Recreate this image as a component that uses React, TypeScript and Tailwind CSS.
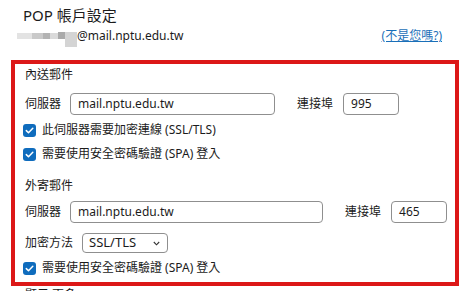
import React from "react";

const Check = () => (
  <span className="flex h-[13px] w-[13px] items-center justify-center rounded-[3px] bg-[#0f6cbd]">
    <svg width="11" height="11" viewBox="0 0 11 11" fill="none">
      <path d="M2.3 5.6 L4.5 7.8 L8.8 3.3" stroke="white" strokeWidth="1.5" strokeLinecap="round" strokeLinejoin="round" />
    </svg>
  </span>
);

const CheckRow = ({ text }: { text: string }) => (
  <div className="flex h-[16px] items-center gap-[6px] pl-[8px]">
    <Check />
    <span className="text-[12px] leading-[16px] text-[#1b1b1b]">{text}</span>
  </div>
);

const Input = ({ value, w }: { value: string; w: string }) => (
  <div className={`flex h-[22px] items-center rounded-[4px] border border-[#8f8f8f] bg-white pl-[7px] text-[12px] text-[#1b1b1b] ${w}`}>
    {value}
  </div>
);

export default function App() {
  return (
    <div className="h-[291px] w-[472px] overflow-hidden bg-white font-['Noto_Sans','Noto_Sans_CJK_TC',sans-serif] text-[#1b1b1b]">
      <div className="pl-[23px] pt-[5px] text-[15px] leading-[20px]">POP 帳戶設定</div>
      <div className="mt-[2px] flex h-[18px] items-center justify-between pl-[17px] pr-[30px]">
        <div className="flex items-center">
          <div className="relative h-[18px] w-[60px]">
            <div className="absolute left-0 top-[6px] h-[6px] w-[15px] bg-[#e3e3e3]" />
            <div className="absolute left-[15px] top-[6px] h-[6px] w-[11px] bg-[#c9c9c9]" />
            <div className="absolute left-[26px] top-[6px] h-[6px] w-[7px] bg-[#b3b3b3]" />
            <div className="absolute left-[33px] top-[6px] h-[6px] w-[8px] bg-[#dadada]" />
            <div className="absolute left-[41px] top-[5px] h-[7px] w-[7px] bg-[#aaaaaa]" />
            <div className="absolute left-[48px] top-[5px] h-[15px] w-[12px] bg-[#d4d4d4]" />
          </div>
          <span className="text-[12px] leading-[18px]">@mail.nptu.edu.tw</span>
        </div>
        <span className="text-[12px] leading-[16px] text-[#1a6fb8] underline">(不是您嗎?)</span>
      </div>

      <div className="ml-[11px] mt-[15px] h-[226px] w-[448px] border-4 border-[#dc1818]">
        <div className="pl-[10px] pt-[3px] text-[12px] leading-[16px]">內送郵件</div>
        <div className="mt-[10px] flex items-center pl-[10px] text-[12px]">
          <span className="w-[36px]">伺服器</span>
          <div className="ml-[9px]"><Input value="mail.nptu.edu.tw" w="w-[205px]" /></div>
          <span className="ml-[22px]">連接埠</span>
          <div className="ml-[10px]"><Input value="995" w="w-[56px]" /></div>
        </div>
        <div className="mt-[7px]"><CheckRow text="此伺服器需要加密連線 (SSL/TLS)" /></div>
        <div className="mt-[8px]"><CheckRow text="需要使用安全密碼驗證 (SPA) 登入" /></div>

        <div className="mt-[16px] pl-[10px] text-[12px] leading-[16px]">外寄郵件</div>
        <div className="mt-[7px] flex items-center pl-[10px] text-[12px]">
          <span className="w-[36px]">伺服器</span>
          <div className="ml-[9px]"><Input value="mail.nptu.edu.tw" w="w-[253px]" /></div>
          <span className="ml-[22px]">連接埠</span>
          <div className="ml-[10px]"><Input value="465" w="w-[56px]" /></div>
        </div>
        <div className="mt-[10px] flex items-center pl-[10px] text-[12px]">
          <span className="w-[48px]">加密方法</span>
          <div className="ml-[9px] flex h-[20px] w-[86px] items-center justify-between rounded-[4px] border border-[#8f8f8f] pl-[6px] pr-[7px] text-[13px]">
            <span>SSL/TLS</span>
            <svg width="7" height="5" viewBox="0 0 7 5" fill="none">
              <path d="M0.8 1 L3.5 3.8 L6.2 1" stroke="#333" strokeWidth="1.1" />
            </svg>
          </div>
        </div>
        <div className="mt-[7px]"><CheckRow text="需要使用安全密碼驗證 (SPA) 登入" /></div>
      </div>
      <div className="pl-[25px] pt-[1px] text-[12px] leading-[16px]">顯示 更多</div>
    </div>
  );
}
